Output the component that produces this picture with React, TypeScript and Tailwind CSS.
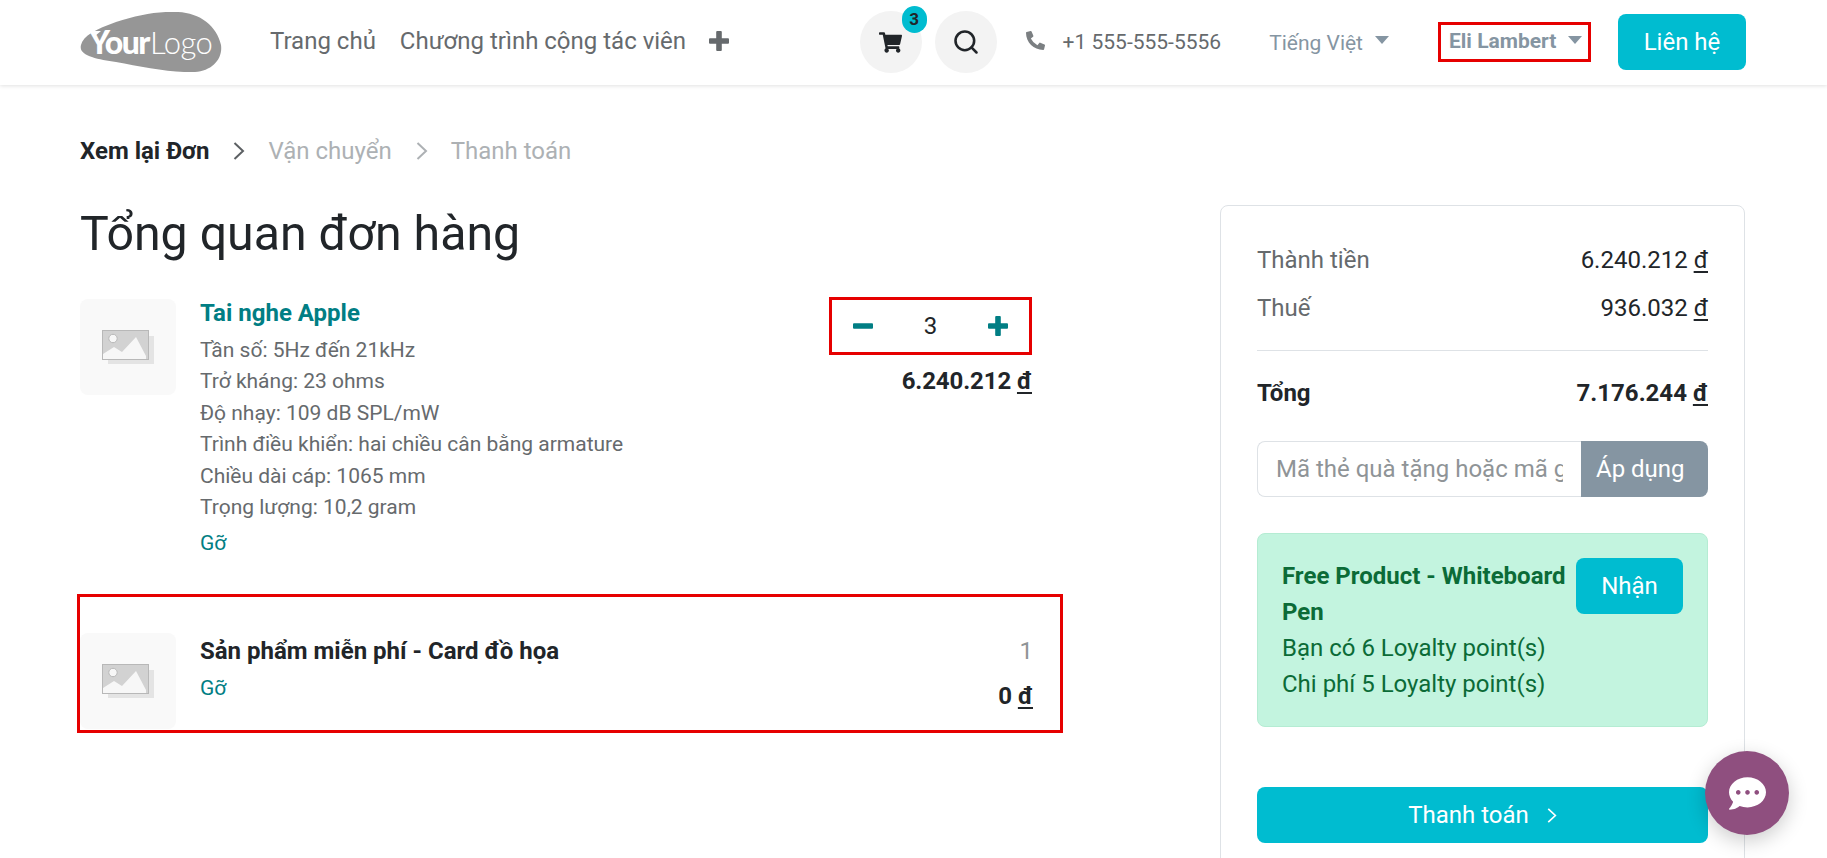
import { FaCommentDots, FaPhoneAlt, FaShoppingCart } from "react-icons/fa";
import { Search } from "lucide-react";

const font = { fontFamily: "Roboto, sans-serif" };

const Logo = () => (
  <svg width="142" height="60" viewBox="0 0 142 60" className="shrink-0">
    <path
      d="M1 33C3 24 16 17 36 10C58 3 78 -1 98 0C120 1 137 14 141 33C143 47 132 59 115 60C92 61 62 55 36 50C18 47 -2 44 1 33Z"
      fill="#969696"
    />
    <path d="M9 19H21L15 24Z" fill="#fff" />
    <text x="9" y="42" fill="#fff" fontSize="32" fontWeight="900" fontFamily="Lato, sans-serif" letterSpacing="-1.6">
      Your
    </text>
    <text x="70" y="42" fill="#fff" fontSize="31" fontWeight="300" fontFamily="Lato, sans-serif" letterSpacing="-0.5">
      Logo
    </text>
  </svg>
);

const Placeholder = () => (
  <div className="w-24 h-24 shrink-0 rounded-lg bg-[#f9f9f9] flex items-center justify-center">
    <svg width="52" height="34" viewBox="0 0 52 34">
      <rect x="6" y="6" width="46" height="28" fill="#e4e4e4" />
      <rect x="0.5" y="0.5" width="46" height="29" fill="#d2d2d2" stroke="#b8b8b8" />
      <circle cx="11" cy="8.5" r="4.2" fill="#f7f7f7" stroke="#b8b8b8" />
      <path d="M1 24L12 17L20 22L34 7L44 26V29H1Z" fill="#f7f7f7" />
    </svg>
  </div>
);

const Plus = ({ className }: { className: string }) => (
  <svg viewBox="0 0 20 20" className={className} fill="currentColor">
    <rect x="7.2" y="0" width="5.6" height="20" rx="1" />
    <rect x="0" y="7.2" width="20" height="5.6" rx="1" />
  </svg>
);

const Minus = ({ className }: { className: string }) => (
  <svg viewBox="0 0 20 20" className={className} fill="currentColor">
    <rect x="0" y="7.2" width="20" height="5.6" rx="1" />
  </svg>
);

const Chevron = ({ className }: { className: string }) => (
  <svg viewBox="0 0 12 18" className={className} fill="none" stroke="currentColor" strokeWidth="2">
    <path d="M1.5 1L10 9L1.5 17" />
  </svg>
);

const Money = ({ value }: { value: string }) => (
  <>
    {value} <span className="underline underline-offset-[3px] decoration-2">đ</span>
  </>
);

const Caret = () => <span className="w-0 h-0 border-x-[7.5px] border-x-transparent border-t-[8px] border-t-[#8595a2] -mt-1" />;

const specs = [
  "Tần số: 5Hz đến 21kHz",
  "Trở kháng: 23 ohms",
  "Độ nhạy: 109 dB SPL/mW",
  "Trình điều khiển: hai chiều cân bằng armature",
  "Chiều dài cáp: 1065 mm",
  "Trọng lượng: 10,2 gram",
];

const App = () => {
  return (
    <div style={font} className="relative h-[858px] overflow-hidden bg-white text-[#212529]">
      <header className="h-[85px] pl-20 pr-[81px] pb-px flex items-center shadow-[0_1px_4px_rgba(0,0,0,0.12)]">
        <Logo />
        <nav className="ml-[48px] -mt-[2px] flex items-center text-[24px] text-[#666a6d]">
          <a>Trang chủ</a>
          <a className="ml-[24px]">Chương trình cộng tác viên</a>
          <Plus className="ml-[23px] w-5 h-5 text-[#666a6d]" />
        </nav>
        <div className="ml-auto flex items-center">
          <div className="relative w-[62px] h-[62px] rounded-full bg-[#f3f3f3] flex items-center justify-center">
            <FaShoppingCart className="w-[23px] h-[23px] text-[#212529]" />
            <span className="absolute -top-[5px] left-[42px] w-[25px] h-[27px] rounded-full bg-[#00bcd0] text-[17px] font-bold flex items-center justify-center">
              3
            </span>
          </div>
          <div className="ml-[13px] w-[62px] h-[62px] rounded-full bg-[#f3f3f3] flex items-center justify-center">
            <Search className="w-[28px] h-[28px] text-[#212529]" strokeWidth={2.2} />
          </div>
          <FaPhoneAlt className="ml-[29px] w-[19px] h-[19px] -mt-1 text-[#7b7f82]" />
          <span className="ml-[18px] mt-px text-[21px] text-[#666a6d]">+1 555-555-5556</span>
          <span className="ml-[48px] mt-1 text-[21px] text-[#8595a2]">Tiếng Việt</span>
          <span className="ml-3 flex"><Caret /></span>
          <div className="ml-[49px] w-[153px] h-[40px] border-[3px] border-[#e60000] flex items-center pl-2 text-[21px] font-bold text-[#8595a2]">
            Eli Lambert
            <span className="ml-3 flex"><Caret /></span>
          </div>
          <a className="ml-[27px] w-[128px] h-[56px] rounded-lg bg-[#00bcd0] text-white text-[24px] flex items-center justify-center">
            Liên hệ
          </a>
        </div>
      </header>

      <main className="pl-20 pr-[82px]">
        <div className="pt-[51px] h-[81px] flex items-center text-[24px] text-[#adb1b4]">
          <span className="font-bold text-[#212529]">Xem lại Đơn</span>
          <Chevron className="ml-[23px] w-3 h-[18px] text-[#5c6063]" />
          <span className="ml-6">Vận chuyển</span>
          <Chevron className="ml-[24px] w-3 h-[18px]" />
          <span className="ml-[23px]">Thanh toán</span>
        </div>

        <div className="mt-[39px] flex justify-between items-start">
          <section className="w-[951px]">
            <h1 className="pt-px text-[48.25px] leading-[56px] mb-[37px]">Tổng quan đơn hàng</h1>

            <div className="flex gap-6">
              <Placeholder />
              <div className="flex-1">
                <a className="block -mt-px text-[24px] leading-[30px] font-bold text-[#017e84]">Tai nghe Apple</a>
                <div className="mt-[7px] text-[21px] leading-[31.4px] text-[#666a6d]">
                  {specs.map((s) => (
                    <div key={s}>{s}</div>
                  ))}
                </div>
                <a className="block mt-[5px] text-[21px] leading-[31px] text-[#017e84]">Gỡ</a>
              </div>
              <div className="flex flex-col items-end -mt-[2px] -mr-px">
                <div className="w-[203px] h-[58px] border-[3px] border-[#e60000] flex items-center justify-between px-[21px] text-[24px]">
                  <Minus className="w-5 h-5 text-[#017e84]" />
                  <span>3</span>
                  <Plus className="w-5 h-5 text-[#017e84]" />
                </div>
                <div className="mt-[11px] text-[24px] leading-[30px] font-bold tracking-[-0.1px]">
                  <Money value="6.240.212" />
                </div>
              </div>
            </div>

            <div className="relative mt-[74px] flex gap-6">
              <div className="absolute -left-[3px] -right-[32px] -top-[39px] -bottom-[4px] border-[3px] border-[#e60000] pointer-events-none" />
              <Placeholder />
              <div className="flex-1 pt-[3px]">
                <div className="text-[24px] leading-[30px] font-bold">Sản phẩm miễn phí - Card đồ họa</div>
                <a className="block mt-[7px] text-[21px] leading-[30px] text-[#017e84]">Gỡ</a>
              </div>
              <div className="flex flex-col items-end pt-[3px] -mr-[2px]">
                <span className="text-[24px] leading-[30px] text-[#8f9497]">1</span>
                <span className="mt-[15px] text-[24px] leading-[30px] font-bold">
                  <Money value="0" />
                </span>
              </div>
            </div>
          </section>

          <aside className="w-[525px] h-[800px] shrink-0 border border-[#dee2e6] rounded-lg px-9 pt-9 text-[24px] leading-9">
            <div className="flex justify-between">
              <span className="text-[#666a6d]">Thành tiền</span>
              <span><Money value="6.240.212" /></span>
            </div>
            <div className="mt-3 flex justify-between">
              <span className="text-[#666a6d]">Thuế</span>
              <span><Money value="936.032" /></span>
            </div>
            <hr className="mt-6 border-[#dee2e6]" />
            <div className="mt-6 flex justify-between font-bold">
              <span>Tổng</span>
              <span><Money value="7.176.244" /></span>
            </div>
            <div className="mt-[30px] h-14 flex">
              <input
                readOnly
                placeholder="Mã thẻ quà tặng hoặc mã giảm giá"
                className="w-[324px] min-w-0 border border-r-0 border-[#dee2e6] rounded-l-lg px-[18px] outline-none placeholder:text-[#8f9497]"
              />
              <button className="flex-1 rounded-r-lg bg-[#8595a2] text-white text-left pl-[15px]">Áp dụng</button>
            </div>
            <div className="mt-9 h-[194px] rounded-lg border border-[#b5ecd3] bg-[#c3f4df] pl-6 pr-6 pt-[24px] flex items-start text-[#0b6b37]">
              <div className="w-[294px] shrink-0">
                <div className="font-bold">Free Product - Whiteboard Pen</div>
                <div>Bạn có 6 Loyalty point(s)</div>
                <div>Chi phí 5 Loyalty point(s)</div>
              </div>
              <button className="ml-auto w-[107px] h-14 rounded-lg bg-[#00bcd0] text-white">Nhận</button>
            </div>
            <button className="mt-[60px] w-full h-14 rounded-lg bg-[#00bcd0] text-white flex items-center justify-center">
              Thanh toán
              <Chevron className="ml-[18px] w-2.5 h-[15px]" />
            </button>
          </aside>
        </div>
      </main>

      <div className="absolute right-[38px] bottom-[23px] w-[84px] h-[84px] rounded-full bg-[#8f4f7f] flex items-center justify-center shadow-[0_6px_20px_rgba(0,0,0,0.2)]">
        <FaCommentDots className="w-[37px] h-[37px] text-white" />
      </div>
    </div>
  );
};

export default App;
